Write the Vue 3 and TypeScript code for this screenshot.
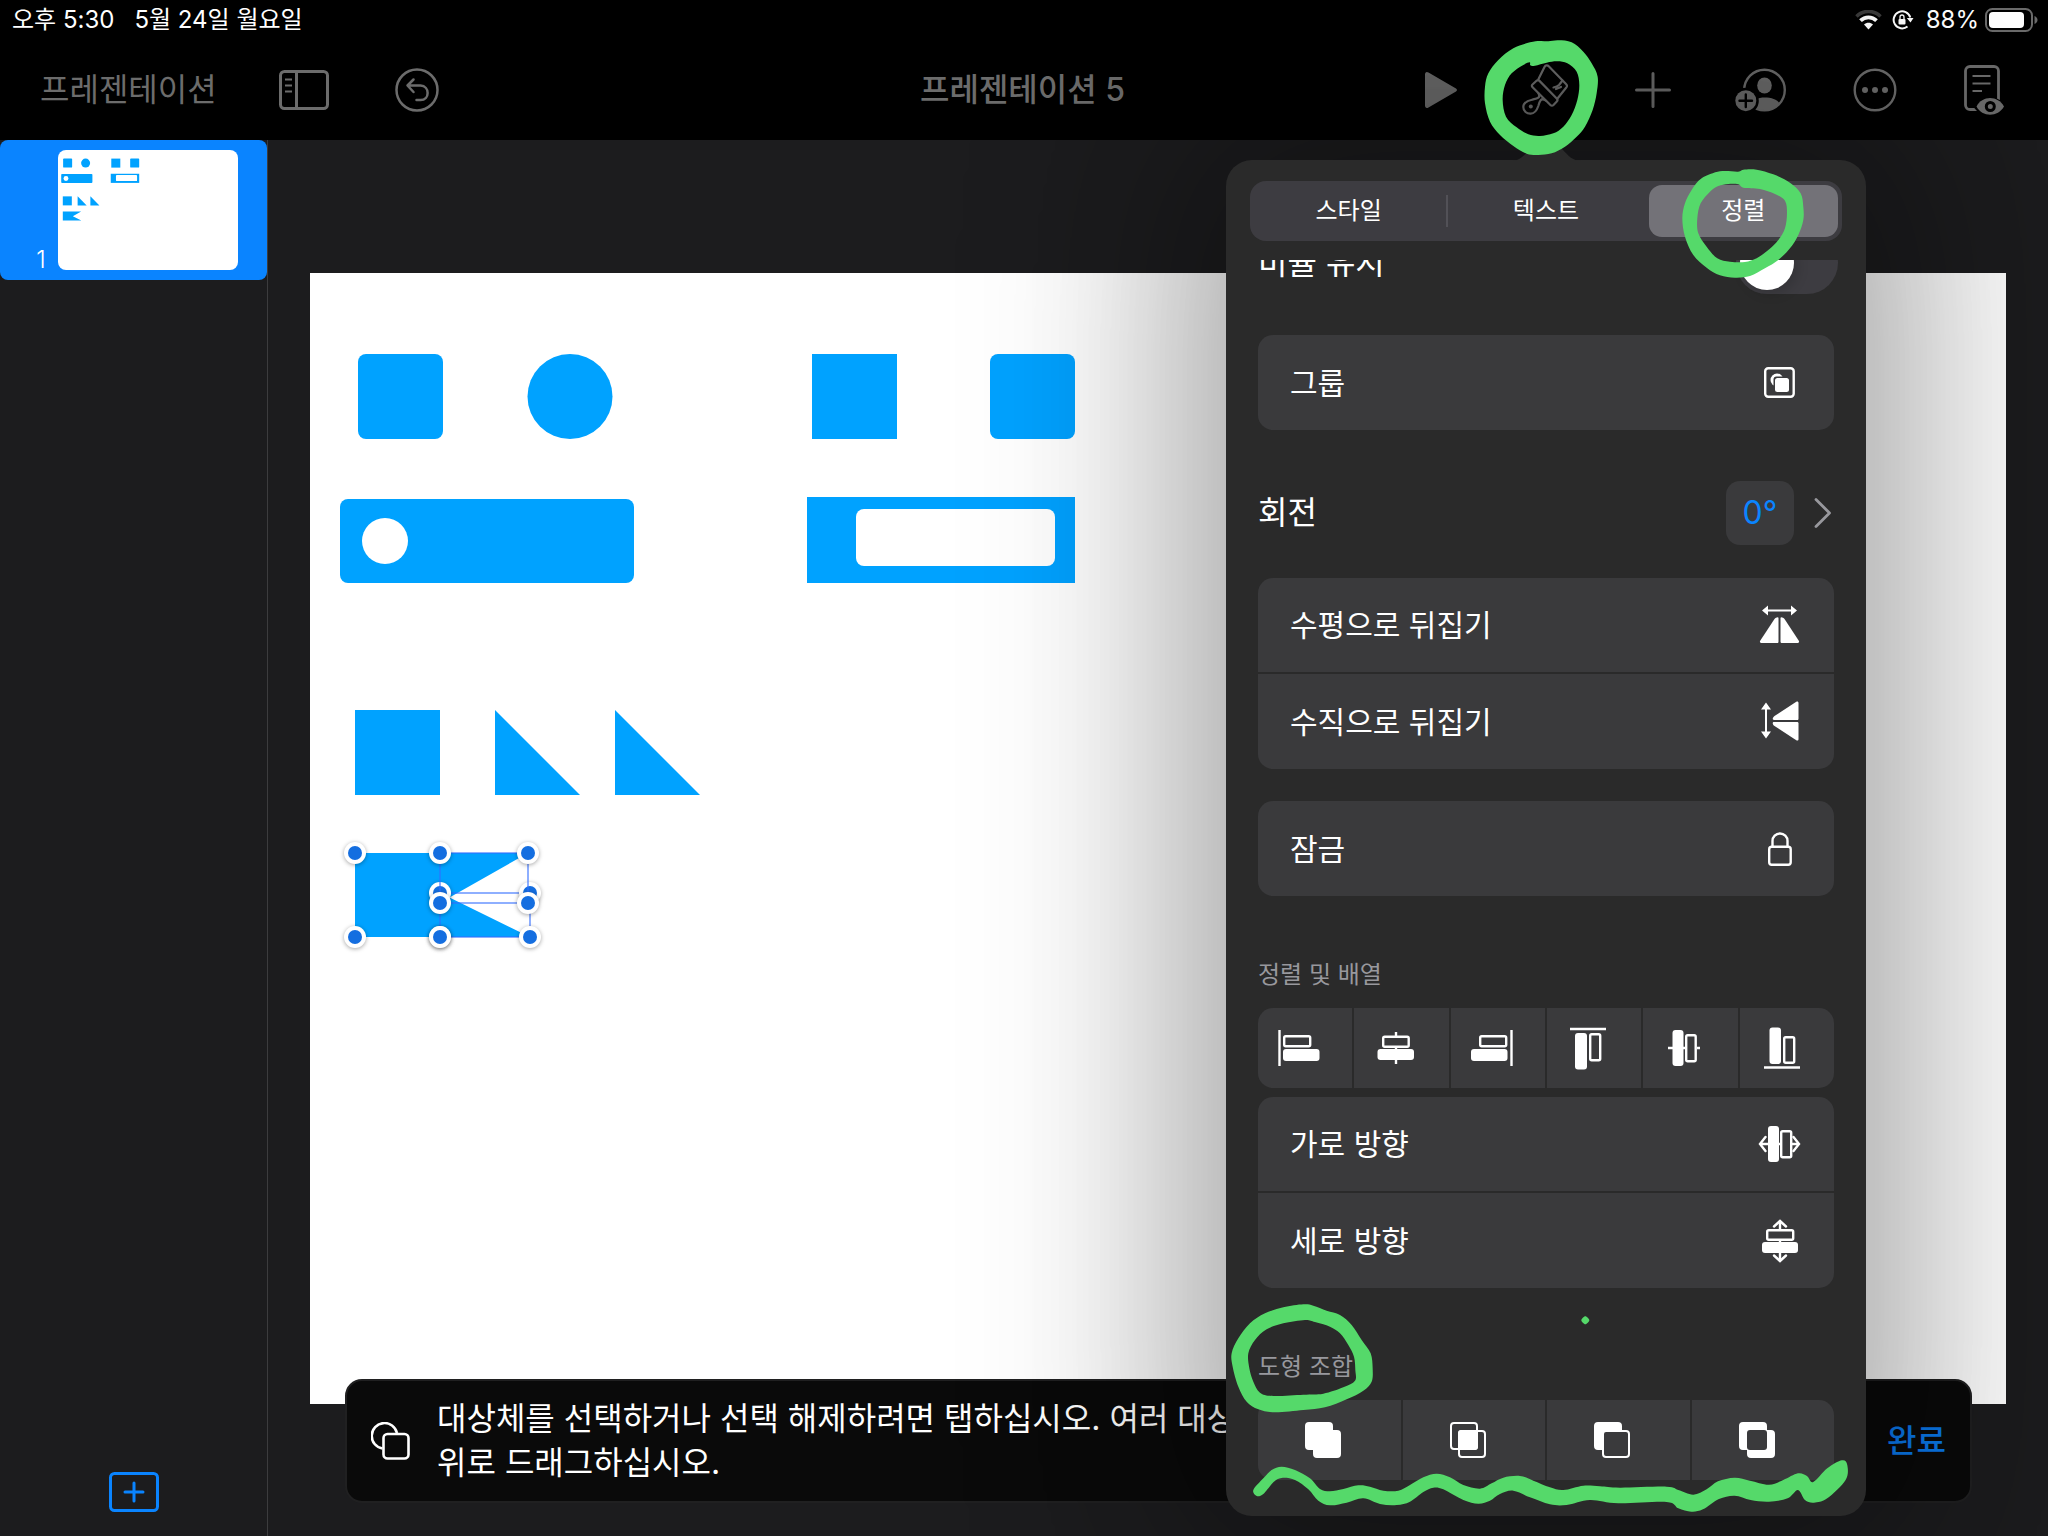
<script setup lang="ts">
import { ref } from 'vue'

type Point = [number, number]

interface Mark {
  transform: string
  loops: Point[][]
}

/** Smooth closed curve through the given points (Catmull-Rom as cubic beziers). */
function closedCurve(points: Point[]): string {
  const n = points.length
  const at = (i: number): Point => points[(i + n) % n]
  let d = `M${at(0)[0]} ${at(0)[1]}`
  for (let i = 0; i < n; i++) {
    const [p0, p1, p2, p3] = [at(i - 1), at(i), at(i + 1), at(i + 2)]
    const c1x = p1[0] + (p2[0] - p0[0]) / 6
    const c1y = p1[1] + (p2[1] - p0[1]) / 6
    const c2x = p2[0] - (p3[0] - p1[0]) / 6
    const c2y = p2[1] - (p3[1] - p1[1]) / 6
    d += `C${c1x.toFixed(1)} ${c1y.toFixed(1)} ${c2x.toFixed(1)} ${c2y.toFixed(1)} ${p2[0]} ${p2[1]}`
  }
  return d + 'Z'
}

const upper = 'translate(254 -160) scale(0.3333)'
const lower = 'translate(4 1130) scale(0.3333)'

const marks: Mark[] = [
  {
    transform: upper,
    loops: [
      [[205,124],[235,121],[275,127],[310,155],[335,190],[353,230],[350,280],[338,330],[315,380],[290,410],[255,440],[215,460],[175,465],[140,461],[100,438],[60,405],[30,365],[15,310],[15,260],[25,220],[55,180],[100,145],[150,127],[180,123]],
      [[149,187],[151,196],[165,197],[200,188],[232,184],[262,190],[290,215],[298,255],[292,300],[275,345],[250,380],[220,400],[180,408],[145,403],[110,382],[78,350],[68,300],[75,255],[95,220],[130,195]]
    ]
  },
  {
    transform: upper,
    loops: [
      [[720,514],[774,515],[790,509],[830,509],[880,523],[930,548],[962,580],[970,620],[970,660],[955,705],[930,745],[895,780],[855,805],[810,828],[765,833],[720,826],[680,803],[640,765],[615,710],[607,655],[615,610],[635,570],[665,535]],
      [[745,552],[775,553],[790,563],[840,567],[885,582],[915,602],[921,640],[915,685],[895,720],[865,750],[830,775],[795,786],[750,785],[712,775],[680,740],[655,700],[652,655],[662,610],[690,575],[715,558]]
    ]
  },
  {
    transform: lower,
    loops: [
      [[220,43],[250,47],[290,62],[330,75],[365,105],[395,150],[422,190],[428,235],[425,275],[400,302],[350,328],[285,352],[220,360],[135,367],[85,358],[50,335],[25,290],[8,230],[5,190],[25,145],[60,100],[105,70],[160,52]],
      [[225,90],[255,96],[300,110],[330,130],[355,165],[372,200],[376,240],[375,272],[340,292],[280,311],[220,314],[130,318],[90,308],[70,275],[58,235],[55,190],[75,150],[110,118],[160,100]]
    ]
  },
  {
    transform: lower,
    loops: [
      [[70,600],[100,565],[125,540],[155,530],[195,540],[240,565],[270,597],[300,604],[340,597],[385,586],[420,590],[460,602],[505,602],[540,585],[580,562],[620,551],[660,562],[700,585],[750,596],[785,580],[820,563],[870,558],[910,572],[960,592],[1000,600],[1060,587],[1110,589],[1170,593],[1310,590],[1345,600],[1390,614],[1430,598],[1464,574],[1514,563],[1560,572],[1617,584],[1660,570],[1704,550],[1731,558],[1750,576],[1792,535],[1836,511],[1852,525],[1847,570],[1792,625],[1752,638],[1725,630],[1704,600],[1673,625],[1617,635],[1562,630],[1514,617],[1467,627],[1419,658],[1384,665],[1345,655],[1310,636],[1165,640],[1080,630],[1010,645],[960,643],[900,622],[850,602],[810,612],[780,632],[745,641],[700,630],[640,598],[610,593],[580,606],[540,635],[500,645],[450,642],[400,625],[350,638],[300,646],[265,632],[235,598],[195,570],[155,564],[130,577],[100,612],[80,618]]
    ]
  },
  {
    transform: lower,
    loops: [[[1066,79],[1078,91],[1066,103],[1054,91]]]
  }
]

const tabs = ['스타일', '텍스트', '정렬']
const activeTab = ref('정렬')
const keepRatio = ref(false)

const backHandles: Point[] = [[130, 620], [220, 620], [220, 664], [130, 664]]
const frontHandles: Point[] = [[45, 580], [45, 664], [130, 580], [218, 580], [130, 630], [218, 630], [130, 664]]

const alignNames = ['왼쪽 정렬', '가로 중앙 정렬', '오른쪽 정렬', '위쪽 정렬', '세로 중앙 정렬', '아래쪽 정렬']
const combineNames = ['합치기', '교차', '빼기', '제외']
</script>

<template>
  <div class="app">
    <svg class="defs" width="0" height="0" aria-hidden="true">
      <symbol id="slide-art" viewBox="0 0 1696 1131">
        <g fill="#00a2ff">
          <rect x="48" y="81" width="85" height="85" rx="8" />
          <circle cx="260" cy="123.5" r="42.5" />
          <rect x="502" y="81" width="85" height="85" />
          <rect x="680" y="81" width="85" height="85" rx="8" />
          <rect x="30" y="226" width="294" height="84" rx="8" />
          <rect x="497" y="224" width="268" height="86" />
          <rect x="45" y="437" width="85" height="85" />
          <path d="M185 437L270 522H185Z" />
          <path d="M305 437L390 522H305Z" />
          <path d="M45 580H218L139.500 624.600L220 664H45Z" />
        </g>
        <circle cx="75" cy="268" r="23" fill="#fff" />
        <rect x="546" y="236" width="199" height="57" rx="8" fill="#fff" />
      </symbol>
    </svg>

    <header class="top">
      <div class="status">
        <div class="status-left">
          <span>오후 5:30</span>
          <span>5월 24일 월요일</span>
        </div>
        <div class="status-right">
          <svg class="wifi" width="27" height="20" viewBox="0 0 27 20">
            <path d="M1.500 6.500C8-.300 19-.300 25.500 6.500" fill="none" stroke="#3c3c3c" stroke-width="3.500" />
            <path d="M5.500 10.700C10 6.200 17 6.200 21.500 10.700" fill="none" stroke="#fff" stroke-width="3.800" />
            <path d="M9 14.600C11.500 12.200 15.500 12.200 18 14.600L13.500 19.500Z" fill="#fff" />
          </svg>
          <svg class="rotation" width="22" height="20" viewBox="0 0 22 20">
            <path d="M18.300 7.500A8.500 8.500 0 1 0 15.500 16.500" fill="none" stroke="#fff" stroke-width="2" />
            <path d="M14.800 8H21.500L18.500 12.500Z" fill="#fff" />
            <rect x="6.500" y="9" width="7" height="5.500" rx="1" fill="#fff" />
            <path d="M8 9V7A2 2 0 0 1 12 7V9" fill="none" stroke="#fff" stroke-width="1.300" />
          </svg>
          <span class="percent">88%</span>
          <svg width="53" height="24" viewBox="0 0 53 24">
            <rect x="1" y="1" width="46" height="22" rx="6.500" fill="none" stroke="#6b6b6b" stroke-width="2" />
            <rect x="4" y="4" width="35" height="16" rx="4" fill="#fff" />
            <path d="M49.500 8C53.500 9.500 53.500 14.500 49.500 16Z" fill="#6b6b6b" />
          </svg>
        </div>
      </div>

      <nav class="toolbar">
        <div class="tools tools-start">
          <button class="tool">프레젠테이션</button>
          <button class="tool" aria-label="보기 옵션">
            <svg width="50" height="40" viewBox="0 0 50 40" fill="none" stroke="currentColor" stroke-width="3">
              <rect x="1.500" y="1.500" width="47" height="37" rx="4" />
              <path d="M17.500 2V38" />
              <path d="M6 9.500H13M6 15.500H13M6 21.500H13" stroke-width="2" />
            </svg>
          </button>
          <button class="tool" aria-label="실행 취소">
            <svg width="52" height="44" viewBox="0 0 52 44" fill="none" stroke="currentColor" stroke-width="2.500" stroke-linecap="round" stroke-linejoin="round">
              <circle cx="26" cy="22" r="20.500" />
              <path d="M22.500 11.500L16.500 17.500L22.500 24M17 17.500H29.500C39 18 39 32 29.500 32H25.500" />
            </svg>
          </button>
        </div>
        <h1 class="title">프레젠테이션 5</h1>
        <div class="tools tools-end">
          <button class="tool" aria-label="재생">
            <svg width="32" height="38" viewBox="0 0 32 38" fill="currentColor">
              <path d="M0 3.500C0 1.200 1.500.300 3.500 1.500L31 17.500C32.300 18.300 32.300 19.700 31 20.500L3.500 36.500C1.500 37.700 0 36.800 0 34.500Z" />
            </svg>
          </button>
          <button class="tool" aria-label="포맷">
            <svg width="50" height="52" viewBox="0 0 50 52" fill="none" stroke="currentColor" stroke-width="2.200" stroke-linejoin="round" stroke-linecap="round">
              <path d="M17.500 15L23.500 3C24.500 1 26.500 1 28 2.500L45 20C46.300 21.300 46.300 22.500 45.300 23.500L36.500 34.500" />
              <path d="M41.500 16.500L38 21C36.500 22.500 34.500 23 32.500 23.500M40 23L35 25" />
              <path d="M11.500 20.500L15.500 16.800C16.500 16 17.600 16 18.500 16.900L35.700 34.500C36.700 35.500 36.700 36.600 35.800 37.500L32.500 41C31.500 42 30.300 42 29.400 41L11.600 23.300C10.600 22.300 10.600 21.300 11.500 20.500Z" />
              <path d="M17.500 29.500C20 34 16 34.500 11 35.700C5.500 37 2.300 39 2.300 43C2.300 47 5.800 50 9.700 49.700C14 49.500 15.800 46.500 17.300 42C18.500 37.500 20 33 24.500 36.500" />
              <circle cx="9.800" cy="42.500" r="2" fill="currentColor" stroke="none" />
            </svg>
          </button>
          <button class="tool" aria-label="추가">
            <svg width="36" height="36" viewBox="0 0 36 36" fill="none" stroke="currentColor" stroke-width="3" stroke-linecap="round">
              <path d="M18 1.500V34.500M1.500 18H34.500" />
            </svg>
          </button>
          <button class="tool" aria-label="공동 작업">
            <svg width="52" height="44" viewBox="0 0 52 44">
              <circle cx="29.500" cy="22" r="20.300" fill="none" stroke="currentColor" stroke-width="2.400" />
              <ellipse cx="29.500" cy="17.500" rx="7.300" ry="8" fill="currentColor" />
              <path d="M14 36C19 27.500 40 27.500 44.500 35.500C37 45 22 45 14 36Z" fill="currentColor" />
              <circle cx="10.800" cy="32.700" r="13" fill="#000" />
              <circle cx="10.800" cy="32.700" r="10.500" fill="currentColor" />
              <path d="M10.800 26.500V39M4.500 32.700H17" stroke="#000" stroke-width="2.400" stroke-linecap="round" />
            </svg>
          </button>
          <button class="tool" aria-label="더 보기">
            <svg width="48" height="44" viewBox="0 0 48 44" fill="currentColor">
              <circle cx="24" cy="22" r="20.300" fill="none" stroke="currentColor" stroke-width="2.400" />
              <circle cx="14" cy="22" r="3" />
              <circle cx="24" cy="22" r="3" />
              <circle cx="34" cy="22" r="3" />
            </svg>
          </button>
          <button class="tool" aria-label="발표자 노트">
            <svg width="42" height="50" viewBox="0 0 42 50" fill="none" stroke="currentColor">
              <rect x="2.500" y="1.500" width="33" height="43" rx="4.500" stroke-width="2.800" />
              <path d="M9.500 11H27.500M9.500 18.500H27.500M9.500 26H19" stroke-width="2.200" />
              <path d="M10.500 41.500C16 29 36 29 43.500 41.500C36 53 16 53 10.500 41.500Z" fill="#000" stroke="none" />
              <path d="M13.500 41.500C19 30 35 30 41 41.500C35 52.500 19 52.500 13.500 41.500Z" fill="currentColor" stroke="none" />
              <circle cx="27.300" cy="41.500" r="4" stroke="#000" stroke-width="3" />
            </svg>
          </button>
        </div>
      </nav>
    </header>

    <div class="workspace">
      <aside class="sidebar">
        <button class="thumb-card">
          <span class="thumb-number">1</span>
          <svg class="thumb" viewBox="0 0 180 120"><use href="#slide-art" width="180" height="120" /></svg>
        </button>
        <button class="add-slide" aria-label="슬라이드 추가">
          <svg width="50" height="40" viewBox="0 0 50 40" fill="none" stroke="currentColor" stroke-width="3" stroke-linecap="round">
            <rect x="1.500" y="1.500" width="47" height="37" rx="4" />
            <path d="M25 11V29M16 20H34" />
          </svg>
        </button>
      </aside>

      <main class="stage">
        <svg class="slide" viewBox="0 0 1696 1131">
          <use href="#slide-art" width="1696" height="1131" />
          <g class="guides">
            <rect x="130" y="620" width="90" height="44" />
          </g>
          <g v-for="[x, y] in backHandles" :key="`b${x}-${y}`" class="handle">
            <circle :cx="x" :cy="y" r="11" class="ring" />
            <circle :cx="x" :cy="y" r="7" class="core" />
          </g>
          <g class="guides">
            <rect x="130" y="580" width="88" height="50" />
          </g>
          <g v-for="[x, y] in frontHandles" :key="`f${x}-${y}`" class="handle">
            <circle :cx="x" :cy="y" r="11" class="ring" />
            <circle :cx="x" :cy="y" r="7" class="core" />
          </g>
        </svg>

        <div class="hint">
          <svg width="40" height="38" viewBox="0 0 40 38" fill="none" stroke="#fff" stroke-width="2.600">
            <path d="M11.500 26.500A12.800 12.800 0 1 1 26 11" />
            <rect x="12.500" y="12" width="25" height="24.500" rx="4" />
          </svg>
          <p>대상체를 선택하거나 선택 해제하려면 탭하십시오. 여러 대상체를 선택하려면 대상체<br>위로 드래그하십시오.</p>
          <button class="done">완료</button>
        </div>
      </main>
    </div>

    <section class="popover" aria-label="정렬">
      <svg class="arrow" width="72" height="20" viewBox="0 0 72 20">
        <path d="M0 20C10 20 14 14 19 9C25 2 30 0 36 0C42 0 47 2 53 9C58 14 62 20 72 20Z" fill="#2a2a2a" />
      </svg>

      <div class="tabs" role="tablist">
        <button
          v-for="tab in tabs"
          :key="tab"
          class="tab"
          :class="{ active: tab === activeTab }"
          role="tab"
          :aria-selected="tab === activeTab"
          @click="activeTab = tab"
        >{{ tab }}</button>
      </div>

      <div class="scroller">
        <div class="content">
          <label class="ratio">
            <span>비율 유지</span>
            <input v-model="keepRatio" type="checkbox" class="switch">
          </label>

          <div class="card group-card">
            <button class="row">
              <span>그룹</span>
              <svg class="icon" viewBox="0 0 48 48">
                <rect x="9.200" y="9.200" width="28.500" height="28.500" rx="3" fill="none" stroke="#fff" stroke-width="2.400" />
                <circle cx="21" cy="21" r="6.500" fill="#fff" />
                <rect x="17.500" y="17.500" width="17" height="17" rx="3" fill="#3a3a3c" />
                <rect x="19" y="19" width="14" height="14" rx="2.500" fill="#fff" />
              </svg>
            </button>
          </div>

          <div class="rotate">
            <span>회전</span>
            <button class="angle">0°</button>
            <svg width="18" height="30" viewBox="0 0 18 30" fill="none" stroke="#98989d" stroke-width="2.800" stroke-linecap="round" stroke-linejoin="round">
              <path d="M2 1.500L15.500 15L2 28.500" />
            </svg>
          </div>

          <div class="card flip-card">
            <button class="row">
              <span>수평으로 뒤집기</span>
              <svg class="icon" viewBox="0 0 48 48" fill="#fff">
                <path d="M10 9.500H37" stroke="#fff" stroke-width="2" />
                <path d="M6 9.500L12 4.500V14.500ZM41 9.500L35 4.500V14.500Z" />
                <path d="M22.500 17V40.500C22.500 41.500 22 42 21 42H5.500C4 42 3.500 41 4.200 39.800L18.500 18C19.800 16.200 22.500 15.500 22.500 17Z" />
                <path d="M24.500 17V40.500C24.500 41.500 25 42 26 42H41.500C43 42 43.500 41 42.800 39.800L28.500 18C27.200 16.200 24.500 15.500 24.500 17Z" />
              </svg>
            </button>
            <button class="row">
              <span>수직으로 뒤집기</span>
              <svg class="icon" viewBox="0 0 48 48" fill="#fff">
                <path d="M10 9V37" stroke="#fff" stroke-width="2" />
                <path d="M10 4.500L5 11.500H15ZM10 40.500L5 33.500H15Z" />
                <path d="M18 22H41C42 22 42.500 21.500 42.500 20.500V5C42.500 3.500 41.500 3 40.300 3.700L18.500 18C16.500 19.400 16 22 18 22Z" />
                <path d="M18 24H41C42 24 42.500 24.500 42.500 25.500V41C42.500 42.500 41.500 43 40.300 42.300L18.500 28C16.500 26.600 16 24 18 24Z" />
              </svg>
            </button>
          </div>

          <div class="card lock-card">
            <button class="row">
              <span>잠금</span>
              <svg class="icon" viewBox="0 0 48 48" fill="none" stroke="#fff" stroke-width="2.400">
                <rect x="13.200" y="21.700" width="21.500" height="18" rx="2.500" />
                <path d="M16.500 21.500V16A7.500 7.500 0 0 1 31.500 16V21.500" />
              </svg>
            </button>
          </div>

          <h2 class="heading">정렬 및 배열</h2>
          <div class="cells">
            <button v-for="(name, i) in alignNames" :key="name" class="cell" :aria-label="name">
              <svg class="icon" viewBox="0 0 48 48" fill="#fff" stroke="#fff" stroke-width="2.400">
                <g v-if="i === 0">
                  <path d="M4.500 6V42" />
                  <rect x="9.200" y="12.200" width="26" height="10" rx="1.500" fill="none" />
                  <rect x="8" y="25" width="36.500" height="12" rx="3" stroke="none" />
                </g>
                <g v-else-if="i === 1">
                  <path d="M25 8V12M25 23V40" />
                  <rect x="12.200" y="12.700" width="25.500" height="10" rx="1.500" fill="none" />
                  <rect x="6.500" y="25" width="36.500" height="11" rx="3" stroke="none" />
                </g>
                <g v-else-if="i === 2">
                  <path d="M43.500 6V42" />
                  <rect x="12.200" y="12.200" width="26" height="10" rx="1.500" fill="none" />
                  <rect x="3" y="25" width="36.500" height="12" rx="3" stroke="none" />
                </g>
                <g v-else-if="i === 3">
                  <path d="M6 5H42" />
                  <rect x="11" y="9" width="12" height="36.500" rx="3" stroke="none" />
                  <rect x="26.200" y="10.200" width="10" height="26" rx="1.500" fill="none" />
                </g>
                <g v-else-if="i === 4">
                  <path d="M8 24H25M37 24H40" />
                  <rect x="12.500" y="6" width="11" height="36" rx="3" stroke="none" />
                  <rect x="26.200" y="11.200" width="9.500" height="26" rx="1.500" fill="none" />
                </g>
                <g v-else>
                  <path d="M7 43.500H43" />
                  <rect x="12.500" y="3.500" width="11.500" height="36.500" rx="3" stroke="none" />
                  <rect x="27.200" y="13.200" width="10" height="25.500" rx="1.500" fill="none" />
                </g>
              </svg>
            </button>
          </div>

          <div class="card spread-card">
            <button class="row">
              <span>가로 방향</span>
              <svg class="icon" viewBox="0 0 48 48" fill="none" stroke="#fff" stroke-width="2.400">
                <path d="M4 24H25M36 24H43" />
                <path d="M9.500 17L4 24L9.500 31M37.500 17L43 24L37.500 31" stroke-linecap="round" />
                <rect x="12" y="6" width="11" height="36" rx="3" fill="#fff" stroke="none" />
                <rect x="25.200" y="11.200" width="10" height="26" rx="1.500" fill="#3a3a3c" />
              </svg>
            </button>
            <button class="row">
              <span>세로 방향</span>
              <svg class="icon" viewBox="0 0 48 48" fill="none" stroke="#fff" stroke-width="2.400">
                <path d="M24 4.500V12M24 22V43" />
                <path d="M18 9.500L24 4L30 9.500M18 38.500L24 44L30 38.500" stroke-linecap="round" />
                <rect x="11.200" y="13.200" width="26" height="9.500" rx="1.500" fill="#3a3a3c" />
                <rect x="6" y="25" width="36" height="11" rx="3" fill="#fff" stroke="none" />
              </svg>
            </button>
          </div>

          <h2 class="heading">도형 조합</h2>
          <div class="cells">
            <button v-for="(name, i) in combineNames" :key="name" class="cell" :aria-label="name">
              <svg class="icon" viewBox="0 0 48 48" fill="#fff" stroke="#fff" stroke-width="2">
                <g v-if="i === 0">
                  <rect x="7" y="7" width="26" height="26" rx="3" />
                  <rect x="15" y="15" width="26" height="26" rx="3" />
                </g>
                <g v-else-if="i === 1">
                  <rect x="7" y="7" width="26" height="26" rx="3" fill="none" />
                  <rect x="15" y="15" width="26" height="26" rx="3" fill="none" />
                  <rect x="15" y="15" width="18" height="18" rx="2" />
                </g>
                <g v-else-if="i === 2">
                  <rect x="7" y="7" width="26" height="26" rx="3" />
                  <rect x="15" y="15" width="26" height="26" rx="3" fill="#3a3a3c" />
                </g>
                <g v-else>
                  <rect x="7" y="7" width="26" height="26" rx="3" />
                  <rect x="15" y="15" width="26" height="26" rx="3" />
                  <rect x="14" y="14" width="20" height="20" rx="3" fill="#3a3a3c" stroke="none" />
                </g>
              </svg>
            </button>
          </div>
        </div>
      </div>

      <svg class="ink" width="640" height="1356" viewBox="0 0 640 1356" aria-hidden="true">
        <path
          v-for="(mark, i) in marks"
          :key="i"
          :transform="mark.transform"
          :d="mark.loops.map(closedCurve).join('')"
          fill-rule="evenodd"
        />
      </svg>
    </section>
  </div>
</template>

<style>
body {
  margin: 0;
  background: #1c1c1e;
}
</style>

<style scoped>
.app {
  position: relative;
  display: flex;
  flex-direction: column;
  min-height: 100vh;
  overflow: hidden;
  background: #1c1c1e;
  color: #fff;
  font-family: Inter, "Noto Sans CJK KR", sans-serif;
  line-height: 44px;
}

.app * {
  box-sizing: border-box;
}

.defs {
  position: absolute;
}

svg {
  display: block;
  flex: none;
}

button {
  margin: 0;
  padding: 0;
  border: 0;
  background: none;
  color: inherit;
  font: inherit;
  cursor: pointer;
}

.top {
  background: #000;
}

.status {
  display: flex;
  justify-content: space-between;
  align-items: center;
  height: 40px;
  padding: 0 10px 0 12px;
  font-size: 24px;
  line-height: 40px;
}

.status-left {
  display: flex;
  gap: 20px;
}

.status-right {
  display: flex;
  align-items: center;
}

.rotation {
  margin: 0 12px 0 10px;
}

.percent {
  margin-right: 6px;
}

.toolbar {
  display: grid;
  grid-template-columns: 1fr auto 1fr;
  align-items: center;
  height: 100px;
  padding: 0 43px 0 40px;
  color: #6c6c6c;
  font-size: 32px;
}

.tools {
  display: flex;
  align-items: center;
}

.tools-start {
  gap: 62px;
}

.tools-end {
  gap: 64px;
  justify-content: flex-end;
}

.title {
  margin: 0;
  font-size: 32px;
  font-weight: 500;
}

.workspace {
  display: flex;
  flex: 1;
}

.sidebar {
  display: flex;
  flex-direction: column;
  justify-content: space-between;
  align-items: center;
  width: 268px;
  padding-bottom: 24px;
  border-right: 1px solid #3c3c3e;
}

.thumb-card {
  display: flex;
  align-items: flex-end;
  gap: 12px;
  width: 100%;
  height: 140px;
  padding: 10px 10px 10px 36px;
  border-radius: 8px;
  background: #0a84ff;
}

.thumb-number {
  width: 10px;
  font-size: 24px;
  font-weight: 300;
  line-height: 20px;
}

.thumb {
  width: 180px;
  border-radius: 8px;
  background: #fff;
}

.add-slide {
  color: #0a84ff;
}

.stage {
  position: relative;
  display: flex;
  flex: 1;
  align-items: center;
  padding: 0 42px;
}

.slide {
  flex: 1;
  width: 100%;
  min-width: 0;
  background: #fff;
}

.guides {
  fill: none;
  stroke: rgba(50, 110, 255, 0.55);
  stroke-width: 2;
}

.handle {
  filter: drop-shadow(0 1px 2px rgba(0, 0, 0, 0.35));
}

.ring {
  fill: #fff;
}

.core {
  fill: #146ee0;
}

.hint {
  position: absolute;
  right: 76px;
  bottom: 33px;
  left: 77px;
  display: flex;
  align-items: center;
  height: 124px;
  padding: 0 24px;
  border: 2px solid #202021;
  border-radius: 17px;
  background: #0a0a0a;
}

.hint p {
  flex: 1;
  margin: 0 0 0 26px;
  font-size: 32px;
}

.done {
  color: #0a7bf0;
  font-size: 32px;
  font-weight: 500;
}

.popover {
  position: absolute;
  top: 160px;
  right: 182px;
  width: 640px;
  padding: 21px 0 36px;
  border-radius: 26px;
  background: #2a2a2a;
  box-shadow:
    0 0 200px 70px rgba(0, 0, 0, 0.22),
    0 0 180px 20px rgba(0, 0, 0, 0.17);
}

.arrow {
  position: absolute;
  top: -19px;
  left: 284px;
}

.tabs {
  display: grid;
  grid-template-columns: repeat(3, 1fr);
  height: 60px;
  margin: 0 24px 19px;
  border-radius: 16px;
  background: #3d3c41;
  font-size: 24px;
}

.tab {
  position: relative;
  margin: 4px;
  border-radius: 13px;
}

.tab.active {
  background: #737278;
}

.tab:first-child::after {
  content: "";
  position: absolute;
  top: 10px;
  right: -5px;
  width: 2px;
  height: 32px;
  background: #525157;
}

.scroller {
  overflow: hidden;
  padding: 0 28px;
  font-size: 30px;
}

.content {
  margin-top: -28px;
}

.ratio {
  display: flex;
  align-items: center;
  justify-content: space-between;
  height: 62px;
  padding-left: 4px;
  font-size: 32px;
}

.switch {
  appearance: none;
  width: 102px;
  height: 62px;
  margin: 0;
  padding: 4px;
  border-radius: 31px;
  background: #3d3c41;
}

.switch::before {
  content: "";
  display: block;
  width: 54px;
  height: 54px;
  border-radius: 50%;
  background: #fff;
  box-shadow: 4px 4px 12px rgba(0, 0, 0, 0.15);
}

.switch:checked {
  background: #30d158;
}

.card,
.cells {
  margin: 0 4px;
  overflow: hidden;
  border-radius: 15px;
}

.card {
  background: #3a3a3c;
}

.group-card {
  margin-top: 41px;
}

.flip-card {
  margin-top: 33px;
}

.lock-card {
  margin-top: 32px;
}

.spread-card {
  margin-top: 9px;
}

.row {
  display: flex;
  align-items: center;
  justify-content: space-between;
  width: 100%;
  height: 95px;
  padding: 0 30px 0 32px;
}

.row:has(+ .row) {
  height: 94px;
}

.row + .row {
  height: 97px;
  border-top: 2px solid #2a2a2a;
}

.icon {
  width: 48px;
  height: 48px;
}

.rotate {
  display: flex;
  align-items: center;
  height: 64px;
  margin: 51px 6px 0 4px;
  font-size: 32px;
}

.rotate span {
  flex: 1;
}

.angle {
  width: 68px;
  height: 64px;
  margin-right: 20px;
  border-radius: 14px;
  background: #3a3a3c;
  color: #0a84ff;
  font-size: 32px;
}

.heading {
  margin: 63px 4px 17px;
  color: #98989d;
  font-size: 24px;
  font-weight: 400;
  line-height: 32px;
}

.cells {
  display: flex;
  gap: 2px;
}

.cell {
  display: flex;
  flex: 1;
  align-items: center;
  justify-content: center;
  height: 80px;
  padding-right: 12px;
  background: #3a3a3c;
}

.ink {
  position: absolute;
  top: 0;
  left: 0;
  overflow: visible;
  fill: #55d96a;
  pointer-events: none;
}
</style>
